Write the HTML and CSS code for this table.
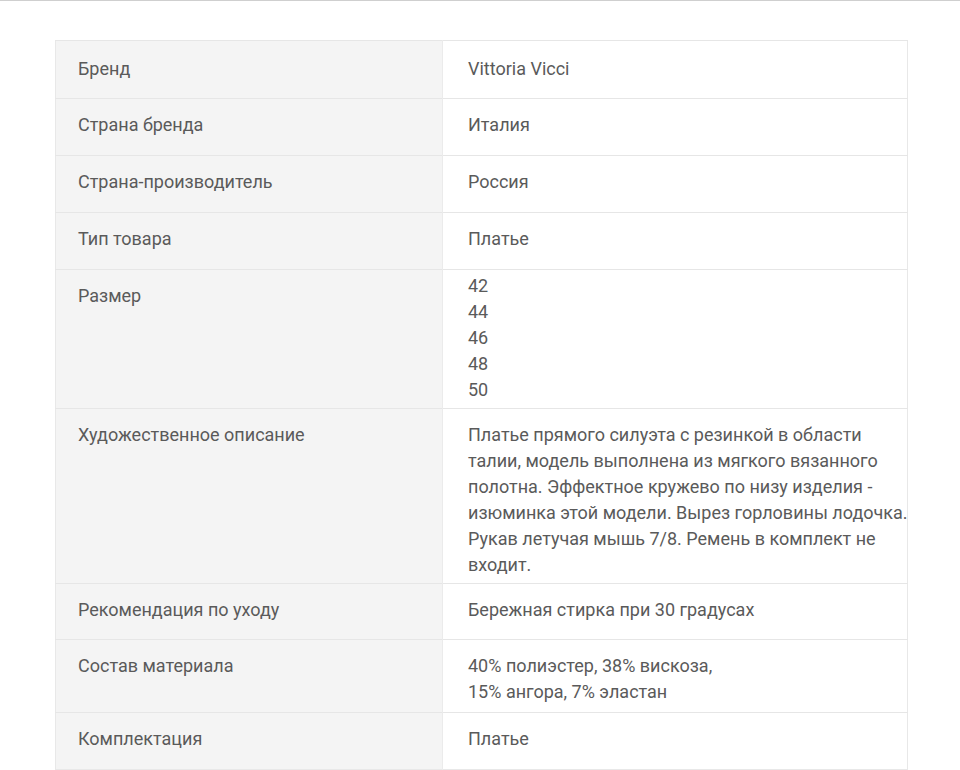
FILE: index.html
```html
<!DOCTYPE html>
<html lang="ru">
<head>
    <meta charset="UTF-8">
    <meta name="viewport" content="width=device-width, initial-scale=1.0">
    <title>Характеристики товара</title>
    <link rel="stylesheet" href="styles.css">
</head>
<body>
    <div class="top-line"></div>

    <table class="specs">
        <tr class="first">
            <td class="name">Бренд</td>
            <td class="value">Vittoria Vicci</td>
        </tr>
        <tr>
            <td class="name">Страна бренда</td>
            <td class="value">Италия</td>
        </tr>
        <tr>
            <td class="name">Страна-производитель</td>
            <td class="value">Россия</td>
        </tr>
        <tr>
            <td class="name">Тип товара</td>
            <td class="value">Платье</td>
        </tr>
        <tr>
            <td class="name">Размер</td>
            <td class="value sizes">
                <div>42</div>
                <div>44</div>
                <div>46</div>
                <div>48</div>
                <div>50</div>
            </td>
        </tr>
        <tr>
            <td class="name">Художественное описание</td>
            <td class="value multi description">Платье прямого силуэта с резинкой в области<br>талии, модель выполнена из мягкого вязанного<br>полотна. Эффектное кружево по низу изделия -<br>изюминка этой модели. Вырез горловины лодочка.<br>Рукав летучая мышь 7/8. Ремень в комплект не<br>входит.</td>
        </tr>
        <tr class="short">
            <td class="name">Рекомендация по уходу</td>
            <td class="value">Бережная стирка при 30 градусах</td>
        </tr>
        <tr>
            <td class="name">Состав материала</td>
            <td class="value multi">40% полиэстер, 38% вискоза,<br>15% ангора, 7% эластан</td>
        </tr>
        <tr>
            <td class="name">Комплектация</td>
            <td class="value">Платье</td>
        </tr>
    </table>
</body>
</html>
```
FILE: styles.css
```css
body {
    margin: 0;
    background: #fff;
    font-family: Roboto, 'Liberation Sans', sans-serif;
    color: #5a5a5a;
}

.top-line {
    height: 1px;
    background: #cfcfcf;
}

.specs {
    border-collapse: collapse;
    margin: 39px 0 0 55px;
    width: 853px;
    table-layout: fixed;
    font-size: 18px;
    line-height: 26px;
    border: 1px solid #e8e8e8;
}

.specs td {
    border-top: 1px solid #e6e6e6;
    vertical-align: top;
}

.specs .name {
    width: 364px;
    background: #f4f4f4;
    padding: 13px 0 17px 22px;
    border-right: 1px solid #ebebeb;
}

.specs .value {
    padding: 13px 0 17px 25px;
}

.specs .first td {
    padding-top: 15px;
    padding-bottom: 16px;
}

.specs .short td {
    padding-bottom: 16px;
}

.specs .value.multi {
    padding-bottom: 7px;
}

.specs .value.description {
    padding-bottom: 5px;
    white-space: nowrap;
}

.specs .value.sizes {
    padding: 3px 0 5px 25px;
}
```
